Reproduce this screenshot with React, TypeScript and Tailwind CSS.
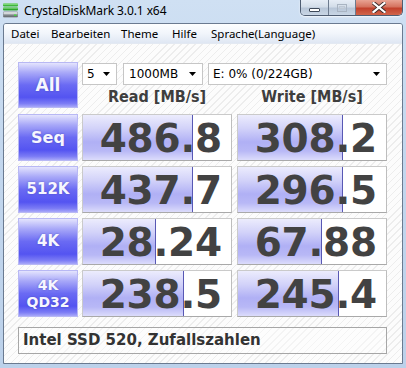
import React from "react";

const rows = [
  { label: ["Seq"], size: "text-[16px]", r: "486.8", rw: 110, w: "308.2", ww: 105 },
  { label: ["512K"], size: "text-[15px]", r: "437.7", rw: 110, w: "296.5", ww: 105 },
  { label: ["4K"], size: "text-[15px]", r: "28.24", rw: 73, w: "67.88", ww: 84 },
  { label: ["4K", "QD32"], size: "text-[14px]", r: "238.5", rw: 101, w: "245.4", ww: 101 },
];

function LabelButton({ lines, size, h }: { lines: string[]; size: string; h: string }) {
  return (
    <div
      className={`w-[60px] ${h} shrink-0 flex flex-col items-center justify-center border border-[#b8b8f4] bg-[linear-gradient(to_bottom,#e4e4fd_0%,#a8a8f8_22%,#6a6af3_50%,#5454f1_78%,#7c7cf5_92%,#a8a8f9_100%)] text-[#f6f6ff] font-bold ${size} leading-[17px] font-['DejaVu_Sans',sans-serif] [text-shadow:0_0_2px_rgba(60,60,160,0.6)]`}
    >
      {lines.map((l) => (
        <span key={l}>{l}</span>
      ))}
    </div>
  );
}

function Cell({ value, fill }: { value: string; fill: number }) {
  return (
    <div className="relative w-[150px] h-[47px] shrink-0 border border-[#cacaca] border-b-[#a9a9a9] border-r-[#bdbdbd] bg-white overflow-hidden">
      <div
        className="absolute left-0 top-0 bottom-0 border-r border-[#5858b4] bg-[linear-gradient(to_bottom,#ececfd_0%,#d2d2f9_30%,#b0b0f5_60%,#b8b8f6_80%,#dcdcfb_100%)]"
        style={{ width: fill }}
      />
      <div className="relative flex h-full items-center justify-end pr-[9px] pt-[1px] text-[39px] leading-none font-bold text-[#424242] font-['DejaVu_Sans',sans-serif] tracking-[-0.2px]">
        {value}
      </div>
    </div>
  );
}

function Select({ text, w, pl, pr }: { text: string; w: string; pl: string; pr: string }) {
  return (
    <div
      className={`${w} h-[22px] shrink-0 flex items-center justify-between ${pl} ${pr} border border-[#c6c6c6] bg-white text-[12px] text-black font-['DejaVu_Sans',sans-serif]`}
    >
      <span>{text}</span>
      <svg width="7" height="4" viewBox="0 0 7 4">
        <path d="M0 0H7L3.5 4Z" fill="#000" />
      </svg>
    </div>
  );
}

function AppIcon() {
  return (
    <svg width="15" height="15" viewBox="0 0 15 15">
      <rect x="0" y="0.5" width="15" height="3" rx="1" fill="#3fb63c" />
      <rect x="0" y="0.5" width="15" height="1.2" rx="0.6" fill="#8fe08a" />
      <rect x="0" y="4.5" width="15" height="3" rx="1" fill="#2ea52c" />
      <rect x="0" y="4.5" width="15" height="1.2" rx="0.6" fill="#7ad476" />
      <rect x="0" y="8.5" width="15" height="6" rx="1.2" fill="#8e9499" />
      <rect x="0.5" y="9" width="14" height="2.2" rx="0.8" fill="#d3d7da" />
      <rect x="0.5" y="12.5" width="14" height="1.6" rx="0.6" fill="#6c7277" />
      <rect x="11" y="11.5" width="2.5" height="1.5" fill="#46d443" />
    </svg>
  );
}

export default function App() {
  return (
    <div className="w-[406px] h-[368px] overflow-hidden bg-[linear-gradient(to_bottom,#cfe0f3_0%,#c3d7ee_40%,#bcd1ea_100%)] font-['Noto_Sans',sans-serif]">
      {/* title bar */}
      <div className="h-[23px] flex items-start justify-between">
        <div className="flex items-center pl-[3px] pt-[3px] gap-[6px]">
          <AppIcon />
          <span className="text-[12px] leading-[15px] text-black tracking-[-0.1px]">CrystalDiskMark 3.0.1 x64</span>
        </div>
        <div className="flex mr-[3px] h-[16px] rounded-b-[5px] border border-t-0 border-[#4f5d72] overflow-hidden shadow-[0_1px_2px_rgba(255,255,255,0.8)]">
          <div className="w-[28px] h-full flex items-end justify-center pb-[3px] border-r border-[#6d7b8f] bg-[linear-gradient(to_bottom,#e6edf6_0%,#d3dde9_45%,#b8c6d8_55%,#c9d6e5_100%)]">
            <div className="w-[11px] h-[4px] bg-white border border-[#3f4a5a] rounded-[1px]" />
          </div>
          <div className="w-[27px] h-full flex items-center justify-center border-r border-[#6d7b8f] bg-[linear-gradient(to_bottom,#e6edf6_0%,#d3dde9_45%,#b8c6d8_55%,#c9d6e5_100%)]">
            <div className="w-[10px] h-[8px] border border-[#a9b4c2] flex items-center justify-center">
              <div className="w-[6px] h-[3px] border border-[#bfc8d3]" />
            </div>
          </div>
          <div className="w-[46px] h-full flex items-center justify-center bg-[linear-gradient(to_bottom,#e8a393_0%,#d5735f_45%,#c2412c_55%,#d1654b_100%)]">
            <svg width="14" height="11" viewBox="0 0 14 11">
              <path d="M1.5 1L12.5 10M12.5 1L1.5 10" stroke="#3a2a2a" strokeWidth="4" strokeLinecap="square" />
              <path d="M1.5 1L12.5 10M12.5 1L1.5 10" stroke="#ffffff" strokeWidth="2.2" strokeLinecap="square" />
            </svg>
          </div>
        </div>
      </div>

      {/* window body */}
      <div className="mx-[3px] h-[341px] border border-[#6a7a90] rounded-t-[3px] overflow-hidden flex flex-col">
        {/* menu bar */}
        <div className="h-[20px] shrink-0 flex items-center pl-[7px] text-[11.5px] text-black bg-[linear-gradient(to_bottom,#fdfeff_0%,#f1f5fb_50%,#dfe7f3_100%)] border-b border-[#e3e9f2]">
          <span className="w-[40px]">Datei</span>
          <span className="w-[70px]">Bearbeiten</span>
          <span className="w-[51px]">Theme</span>
          <span className="w-[39px]">Hilfe</span>
          <span>Sprache(Language)</span>
        </div>

        {/* client area */}
        <div className="flex-1 pl-[14px] pt-[18px] flex flex-col bg-[#fbfbfb] bg-[image:repeating-linear-gradient(135deg,#ededed_0px,#ededed_1px,#fcfcfc_1px,#fcfcfc_5px)]">
          {/* top row */}
          <div className="flex">
            <LabelButton lines={["All"]} size="text-[17px]" h="h-[46px]" />
            <div className="ml-[4px] flex flex-col">
              <div className="flex mt-[1px]">
                <Select text="5" w="w-[35px]" pl="pl-[4px]" pr="pr-[6px]" />
                <div className="w-[6px]" />
                <Select text="1000MB" w="w-[80px]" pl="pl-[5px]" pr="pr-[6px]" />
                <div className="w-[5px]" />
                <Select text="E: 0% (0/224GB)" w="w-[179px]" pl="pl-[4px]" pr="pr-[6px]" />
              </div>
              <div className="flex flex-1 items-center text-[16px] font-bold text-[#3e3e3e] font-['DejaVu_Sans_Condensed','DejaVu_Sans',sans-serif] [font-stretch:condensed]">
                <div className="w-[150px] text-center">Read [MB/s]</div>
                <div className="w-[5px]" />
                <div className="w-[150px] text-center">Write [MB/s]</div>
              </div>
            </div>
          </div>

          {rows.map((row) => (
            <div key={row.r} className="flex mt-[5px]">
              <LabelButton lines={row.label} size={row.size} h="h-[47px]" />
              <div className="w-[4px]" />
              <Cell value={row.r} fill={row.rw} />
              <div className="w-[5px]" />
              <Cell value={row.w} fill={row.ww} />
            </div>
          ))}

          <div className="mt-[10px] w-[369px] h-[27px] flex items-center pl-[4px] border border-[#a6a6a6] bg-white/40 text-[15px] font-bold text-[#333333] font-['DejaVu_Sans',sans-serif]">
            Intel SSD 520, Zufallszahlen
          </div>
        </div>
      </div>
    </div>
  );
}
